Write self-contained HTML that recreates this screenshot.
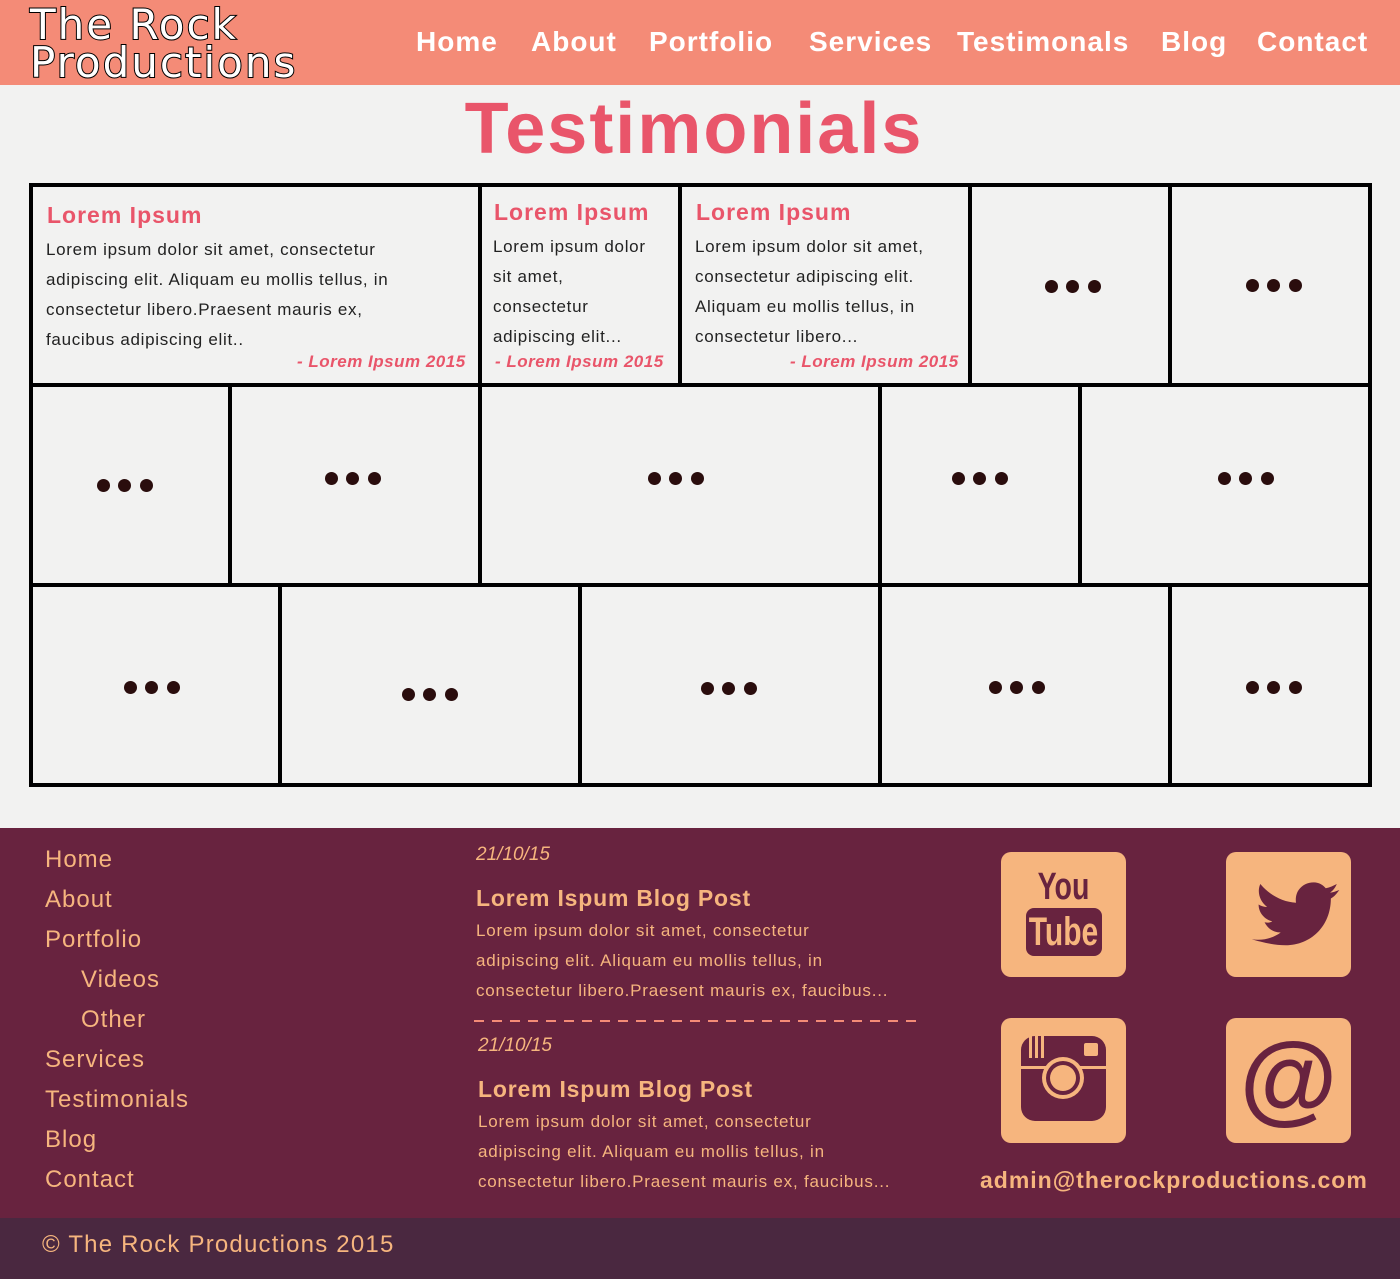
<!DOCTYPE html>
<html><head><meta charset="utf-8"><style>
*{margin:0;padding:0;box-sizing:border-box}
body{width:1400px;height:1279px;position:relative;background:#f2f2f1;font-family:"Liberation Sans",sans-serif;overflow:hidden}
.abs{position:absolute}
#hdr{left:0;top:0;width:1400px;height:85px;background:#f48b77}
.logo{font-size:42px;line-height:38px;color:#fff;-webkit-text-stroke:2px #000;paint-order:stroke fill;letter-spacing:2px;font-family:"DejaVu Sans",sans-serif}
.nav{top:26px;font-size:28px;font-weight:bold;color:#fff;letter-spacing:1px}
h1{position:absolute;left:0;width:1388px;text-align:center;top:88px;font-size:72px;color:#e9556a;font-weight:bold;letter-spacing:2px}
.v{position:absolute;width:4px;background:#000}
.h{position:absolute;height:4px;background:#000}
.dots{position:absolute;width:60px;height:14px}
.dots i{position:absolute;top:0;width:13px;height:13px;border-radius:50%;background:#2a0d0d}
.ct{position:absolute;font-size:23px;font-weight:bold;color:#e9556a;letter-spacing:1px}
.cb{position:absolute;font-size:17px;line-height:30px;color:#222;letter-spacing:.7px}
.cs{position:absolute;font-size:17px;font-weight:bold;font-style:italic;color:#e9556a;letter-spacing:.5px}
#ft{left:0;top:828px;width:1400px;height:390px;background:#68233f}
#bb{left:0;top:1218px;width:1400px;height:61px;background:#4a2840}
.fl{position:absolute;font-size:24px;color:#f6b57e;letter-spacing:1px}
.fd{position:absolute;font-size:19px;font-style:italic;color:#f6b57e}
.fh{position:absolute;font-size:23px;font-weight:bold;color:#f6b57e;letter-spacing:.8px}
.fp{position:absolute;font-size:17px;line-height:30px;color:#f6b57e;letter-spacing:.8px}
.ic{position:absolute;width:125px;height:125px;background:#f6b57e;border-radius:10px}
</style></head><body>
<div id="hdr" class="abs"></div>
<div class="abs logo" style="left:30px;top:6px">The Rock<br>Productions</div>
<div class="abs nav" style="left:416px">Home</div>
<div class="abs nav" style="left:531px">About</div>
<div class="abs nav" style="left:649px">Portfolio</div>
<div class="abs nav" style="left:809px">Services</div>
<div class="abs nav" style="left:957px">Testimonals</div>
<div class="abs nav" style="left:1161px">Blog</div>
<div class="abs nav" style="left:1257px">Contact</div>
<h1>Testimonials</h1>

<div class="h" style="left:29px;top:183px;width:1343px"></div>
<div class="h" style="left:29px;top:383px;width:1343px"></div>
<div class="h" style="left:29px;top:583px;width:1343px"></div>
<div class="h" style="left:29px;top:783px;width:1343px"></div>
<div class="v" style="left:29px;top:183px;height:604px"></div>
<div class="v" style="left:1368px;top:183px;height:604px"></div>
<div class="v" style="left:478px;top:183px;height:202px"></div>
<div class="v" style="left:678px;top:183px;height:202px"></div>
<div class="v" style="left:968px;top:183px;height:202px"></div>
<div class="v" style="left:1168px;top:183px;height:202px"></div>
<div class="v" style="left:228px;top:383px;height:202px"></div>
<div class="v" style="left:478px;top:383px;height:202px"></div>
<div class="v" style="left:878px;top:383px;height:202px"></div>
<div class="v" style="left:1078px;top:383px;height:202px"></div>
<div class="v" style="left:278px;top:583px;height:202px"></div>
<div class="v" style="left:578px;top:583px;height:202px"></div>
<div class="v" style="left:878px;top:583px;height:202px"></div>
<div class="v" style="left:1168px;top:583px;height:202px"></div>

<div class="ct" style="left:47px;top:202px">Lorem Ipsum</div>
<div class="cb" style="left:46px;top:235px">Lorem ipsum dolor sit amet, consectetur<br>adipiscing elit. Aliquam eu mollis tellus, in<br>consectetur libero.Praesent mauris ex,<br>faucibus adipiscing elit..</div>
<div class="cs" style="left:297px;top:352px">- Lorem Ipsum 2015</div>
<div class="ct" style="left:494px;top:199px">Lorem Ipsum</div>
<div class="cb" style="left:493px;top:232px">Lorem ipsum dolor<br>sit amet,<br>consectetur<br>adipiscing elit...</div>
<div class="cs" style="left:495px;top:352px">- Lorem Ipsum 2015</div>
<div class="ct" style="left:696px;top:199px">Lorem Ipsum</div>
<div class="cb" style="left:695px;top:232px">Lorem ipsum dolor sit amet,<br>consectetur adipiscing elit.<br>Aliquam eu mollis tellus, in<br>consectetur libero...</div>
<div class="cs" style="left:790px;top:352px">- Lorem Ipsum 2015</div>

<div class="dots" style="left:1045px;top:280px"><i style="left:0"></i><i style="left:21px"></i><i style="left:43px"></i></div>
<div class="dots" style="left:1246px;top:279px"><i style="left:0"></i><i style="left:21px"></i><i style="left:43px"></i></div>
<div class="dots" style="left:97px;top:479px"><i style="left:0"></i><i style="left:21px"></i><i style="left:43px"></i></div>
<div class="dots" style="left:325px;top:472px"><i style="left:0"></i><i style="left:21px"></i><i style="left:43px"></i></div>
<div class="dots" style="left:648px;top:472px"><i style="left:0"></i><i style="left:21px"></i><i style="left:43px"></i></div>
<div class="dots" style="left:952px;top:472px"><i style="left:0"></i><i style="left:21px"></i><i style="left:43px"></i></div>
<div class="dots" style="left:1218px;top:472px"><i style="left:0"></i><i style="left:21px"></i><i style="left:43px"></i></div>
<div class="dots" style="left:124px;top:681px"><i style="left:0"></i><i style="left:21px"></i><i style="left:43px"></i></div>
<div class="dots" style="left:402px;top:688px"><i style="left:0"></i><i style="left:21px"></i><i style="left:43px"></i></div>
<div class="dots" style="left:701px;top:682px"><i style="left:0"></i><i style="left:21px"></i><i style="left:43px"></i></div>
<div class="dots" style="left:989px;top:681px"><i style="left:0"></i><i style="left:21px"></i><i style="left:43px"></i></div>
<div class="dots" style="left:1246px;top:681px"><i style="left:0"></i><i style="left:21px"></i><i style="left:43px"></i></div>

<div id="ft" class="abs"></div>
<div class="fl" style="left:45px;top:846px">Home</div>
<div class="fl" style="left:45px;top:886px">About</div>
<div class="fl" style="left:45px;top:926px">Portfolio</div>
<div class="fl" style="left:81px;top:966px">Videos</div>
<div class="fl" style="left:81px;top:1006px">Other</div>
<div class="fl" style="left:45px;top:1046px">Services</div>
<div class="fl" style="left:45px;top:1086px">Testimonials</div>
<div class="fl" style="left:45px;top:1126px">Blog</div>
<div class="fl" style="left:45px;top:1166px">Contact</div>

<div class="fd" style="left:476px;top:844px">21/10/15</div>
<div class="fh" style="left:476px;top:885px">Lorem Ispum Blog Post</div>
<div class="fp" style="left:476px;top:916px">Lorem ipsum dolor sit amet, consectetur<br>adipiscing elit. Aliquam eu mollis tellus, in<br>consectetur libero.Praesent mauris ex, faucibus...</div>
<div class="abs" style="left:474px;top:1020px;width:442px;height:2px;background:repeating-linear-gradient(90deg,#f48b77 0 10px,transparent 10px 18px)"></div>
<div class="fd" style="left:478px;top:1035px">21/10/15</div>
<div class="fh" style="left:478px;top:1076px">Lorem Ispum Blog Post</div>
<div class="fp" style="left:478px;top:1107px">Lorem ipsum dolor sit amet, consectetur<br>adipiscing elit. Aliquam eu mollis tellus, in<br>consectetur libero.Praesent mauris ex, faucibus...</div>

<div class="ic" style="left:1001px;top:852px">
<div class="abs" style="left:0;width:125px;top:14px;text-align:center;font-size:38px;font-weight:bold;color:#68233f;transform:scaleX(.75)">You</div>
<div class="abs" style="left:25px;top:56px;width:76px;height:48px;background:#68233f;border-radius:8px"></div>
<div class="abs" style="left:0;width:125px;top:58px;text-align:center;font-size:40px;font-weight:bold;color:#f6b57e;transform:scaleX(.75)">Tube</div>
</div>
<div class="ic" style="left:1226px;top:852px">
<svg width="125" height="125" viewBox="0 0 125 125"><path fill="#68233f" d="M28 98c14 2 26-2 34-8-10 0-16-6-19-12 4 1 7 0 9-1-10-3-16-11-16-20 3 2 7 3 10 3-9-7-12-18-8-27 11 13 26 21 42 22-2-14 8-24 21-24 6 0 11 3 14 7 5-1 9-3 13-5-2 5-5 8-8 10 4 0 8-2 11-3-3 4-6 8-10 10 0 33-24 55-53 55-15 0-30-4-40-7z" transform="translate(2,4) scale(.85)"/></svg>
</div>
<div class="ic" style="left:1001px;top:1018px">
<svg width="125" height="125" viewBox="0 0 125 125"><rect x="20" y="18" width="85" height="85" rx="14" fill="#68233f"/><rect x="20" y="48" width="85" height="3" fill="#f6b57e"/><rect x="28" y="18" width="3" height="22" fill="#f6b57e"/><rect x="34" y="18" width="3" height="22" fill="#f6b57e"/><rect x="40" y="18" width="3" height="22" fill="#f6b57e"/><rect x="83" y="25" width="14" height="13" rx="2" fill="#f6b57e"/><circle cx="62" cy="60" r="21" fill="#f6b57e"/><circle cx="62" cy="60" r="17" fill="#68233f"/><circle cx="62" cy="60" r="13" fill="#f6b57e"/></svg>
</div>
<div class="ic" style="left:1226px;top:1018px">
<div class="abs" style="left:0;width:125px;top:0;text-align:center;font-size:100px;line-height:120px;font-weight:bold;color:#68233f">@</div>
</div>
<div class="abs" style="left:980px;top:1167px;font-size:23px;font-weight:bold;color:#f6b57e;letter-spacing:1px">admin@therockproductions.com</div>

<div id="bb" class="abs"></div>
<div class="abs" style="left:42px;top:1231px;font-size:24px;color:#f6b57e;letter-spacing:1.2px">© The Rock Productions 2015</div>
</body></html>
